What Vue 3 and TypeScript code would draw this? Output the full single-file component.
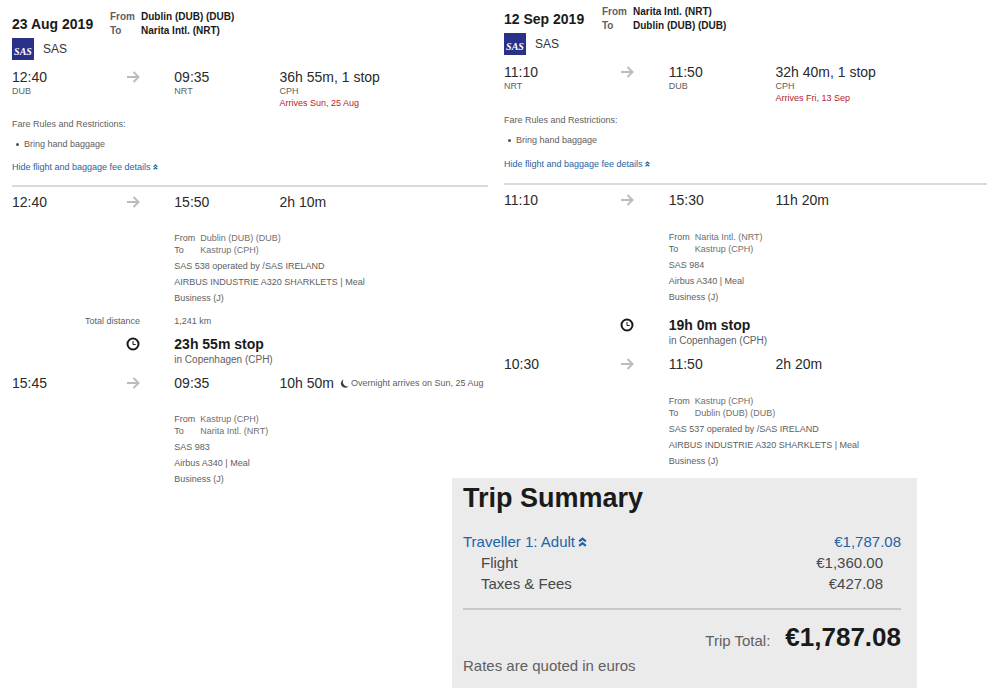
<script setup lang="ts">
import { reactive, ref } from 'vue'

interface Leg {
  depart: string
  arrive: string
  duration: string
  overnight?: string
  from: string
  to: string
  notes: string[]
  distance?: string
  stop?: { length: string; place: string }
}

interface Journey {
  id: string
  date: string
  from: string
  to: string
  depart: string
  departCode: string
  arrive: string
  arriveCode: string
  duration: string
  via: string
  arrivalNote: string
  legs: Leg[]
}

const journeys: Journey[] = [
  {
    id: 'outbound',
    date: '23 Aug 2019',
    from: 'Dublin (DUB) (DUB)',
    to: 'Narita Intl. (NRT)',
    depart: '12:40',
    departCode: 'DUB',
    arrive: '09:35',
    arriveCode: 'NRT',
    duration: '36h 55m, 1 stop',
    via: 'CPH',
    arrivalNote: 'Arrives Sun, 25 Aug',
    legs: [
      {
        depart: '12:40',
        arrive: '15:50',
        duration: '2h 10m',
        from: 'Dublin (DUB) (DUB)',
        to: 'Kastrup (CPH)',
        notes: ['SAS 538 operated by /SAS IRELAND', 'AIRBUS INDUSTRIE A320 SHARKLETS | Meal', 'Business (J)'],
        distance: '1,241 km',
        stop: { length: '23h 55m stop', place: 'in Copenhagen (CPH)' },
      },
      {
        depart: '15:45',
        arrive: '09:35',
        duration: '10h 50m',
        overnight: 'Overnight arrives on Sun, 25 Aug',
        from: 'Kastrup (CPH)',
        to: 'Narita Intl. (NRT)',
        notes: ['SAS 983', 'Airbus A340 | Meal', 'Business (J)'],
      },
    ],
  },
  {
    id: 'inbound',
    date: '12 Sep 2019',
    from: 'Narita Intl. (NRT)',
    to: 'Dublin (DUB) (DUB)',
    depart: '11:10',
    departCode: 'NRT',
    arrive: '11:50',
    arriveCode: 'DUB',
    duration: '32h 40m, 1 stop',
    via: 'CPH',
    arrivalNote: 'Arrives Fri, 13 Sep',
    legs: [
      {
        depart: '11:10',
        arrive: '15:30',
        duration: '11h 20m',
        from: 'Narita Intl. (NRT)',
        to: 'Kastrup (CPH)',
        notes: ['SAS 984', 'Airbus A340 | Meal', 'Business (J)'],
        stop: { length: '19h 0m stop', place: 'in Copenhagen (CPH)' },
      },
      {
        depart: '10:30',
        arrive: '11:50',
        duration: '2h 20m',
        from: 'Kastrup (CPH)',
        to: 'Dublin (DUB) (DUB)',
        notes: ['SAS 537 operated by /SAS IRELAND', 'AIRBUS INDUSTRIE A320 SHARKLETS | Meal', 'Business (J)'],
      },
    ],
  },
]

const detailsOpen = reactive<Record<string, boolean>>({ outbound: true, inbound: true })
const fareOpen = ref(true)

const fareItems = [
  { label: 'Flight', amount: '€1,360.00' },
  { label: 'Taxes & Fees', amount: '€427.08' },
]
</script>

<template>
  <main class="trip">
    <section v-for="j in journeys" :key="j.id" class="journey" :class="`journey--${j.id}`">
      <header class="head">
        <h2 class="date">{{ j.date }}</h2>
        <dl class="route route--head">
          <dt>From</dt>
          <dd>{{ j.from }}</dd>
          <dt>To</dt>
          <dd>{{ j.to }}</dd>
        </dl>
      </header>

      <div class="carrier">
        <span class="logo" aria-hidden="true">SAS</span>
        <span>SAS</span>
      </div>

      <div class="row row--overview">
        <div class="col-depart">
          <div class="time">{{ j.depart }}</div>
          <div class="code">{{ j.departCode }}</div>
        </div>
        <svg class="arrow" viewBox="0 0 14 12" aria-hidden="true"><path d="M1 6H13M7.5 1L12.5 6L7.5 11" /></svg>
        <div class="col-arrive">
          <div class="time">{{ j.arrive }}</div>
          <div class="code">{{ j.arriveCode }}</div>
        </div>
        <div class="col-duration">
          <div class="time">{{ j.duration }}</div>
          <div class="code">{{ j.via }}</div>
          <div class="alert">{{ j.arrivalNote }}</div>
        </div>
      </div>

      <p class="rules">Fare Rules and Restrictions:</p>
      <ul class="baggage">
        <li>Bring hand baggage</li>
      </ul>
      <button
        type="button"
        class="link toggle"
        :aria-expanded="detailsOpen[j.id]"
        @click="detailsOpen[j.id] = !detailsOpen[j.id]"
      >
        Hide flight and baggage fee details<svg class="chevrons" viewBox="0 0 8 9" aria-hidden="true">
          <path d="M1 4L4 1.5L7 4M1 8L4 5.5L7 8" />
        </svg>
      </button>
      <hr class="rule" />

      <div v-show="detailsOpen[j.id]">
        <article v-for="(leg, i) in j.legs" :key="i" class="leg">
          <div class="row">
            <div class="time col-depart">{{ leg.depart }}</div>
            <svg class="arrow" viewBox="0 0 14 12" aria-hidden="true"><path d="M1 6H13M7.5 1L12.5 6L7.5 11" /></svg>
            <div class="time col-arrive">{{ leg.arrive }}</div>
            <div class="time col-duration duration">
              {{ leg.duration }}
              <span v-if="leg.overnight" class="overnight">
                <svg class="moon" viewBox="0 0 10 10" aria-hidden="true">
                  <path d="M4 .5A4.8 4.8 0 1 0 9.5 8A5 5 0 0 1 4 .5Z" />
                </svg>
                {{ leg.overnight }}
              </span>
            </div>
          </div>
          <div class="row details">
            <div class="wide">
              <dl class="route">
                <dt>From</dt>
                <dd>{{ leg.from }}</dd>
                <dt>To</dt>
                <dd>{{ leg.to }}</dd>
              </dl>
              <p v-for="note in leg.notes" :key="note" class="note">{{ note }}</p>
            </div>
          </div>
          <div v-if="leg.distance" class="row distance">
            <span class="distance-label">Total distance</span>
            <span class="wide">{{ leg.distance }}</span>
          </div>
          <div v-if="leg.stop" class="row layover">
            <svg class="clock" viewBox="0 0 14 14" aria-hidden="true">
              <circle cx="7" cy="7" r="5.5" />
              <path d="M7 4V7.5H9.7" />
            </svg>
            <div class="wide">
              <h3 class="stop">{{ leg.stop.length }}</h3>
              <p class="place">{{ leg.stop.place }}</p>
            </div>
          </div>
        </article>
      </div>
    </section>

    <aside class="summary">
      <h2 class="summary-title">Trip Summary</h2>
      <table class="prices">
        <tbody>
          <tr class="traveller">
            <th scope="row">
              <button type="button" class="link" :aria-expanded="fareOpen" @click="fareOpen = !fareOpen">
                Traveller 1: Adult<svg class="chevrons chevrons--large" viewBox="0 0 8 9" aria-hidden="true">
                  <path d="M1 4L4 1.5L7 4M1 8L4 5.5L7 8" />
                </svg>
              </button>
            </th>
            <td>€1,787.08</td>
          </tr>
          <tr v-for="item in fareItems" v-show="fareOpen" :key="item.label" class="item">
            <th scope="row">{{ item.label }}</th>
            <td>{{ item.amount }}</td>
          </tr>
        </tbody>
      </table>
      <p class="total">
        <span>Trip Total:</span>
        <strong>€1,787.08</strong>
      </p>
      <p class="rates">Rates are quoted in euros</p>
    </aside>
  </main>
</template>

<style>
body {
  margin: 0;
  background: #fff;
}
</style>

<style scoped>
.trip {
  display: grid;
  grid-template-columns: minmax(0, 476fr) minmax(0, 483fr);
  grid-template-rows: auto 1fr;
  column-gap: 16px;
  min-height: 100vh;
  box-sizing: border-box;
  padding: 0 14px 0 12px;
  font-family: 'Liberation Sans', Arial, sans-serif;
  font-size: 9px;
  line-height: 12px;
  color: #606060;
}

h2,
h3,
p,
dl,
dd,
ul {
  margin: 0;
}

.journey--outbound {
  --rules-gap: 9px;
  --link-gap: 11px;
  --rule-gap: 12px;
  --details-gap: 22px;
  grid-row: 1 / span 2;
  padding-top: 10px;
}

.journey--inbound {
  --rules-gap: 10px;
  --link-gap: 12px;
  --rule-gap: 13px;
  --details-gap: 23px;
  padding-top: 5px;
}

.head {
  display: grid;
  grid-template-columns: 98px 1fr;
}

.date {
  font-size: 14px;
  line-height: 28px;
  color: #1a1a1a;
  white-space: nowrap;
}

.route {
  display: grid;
  grid-template-columns: 26px 1fr;
  color: #707070;
}

.route dt {
  color: #606060;
}

.route--head {
  grid-template-columns: 31px 1fr;
  font-size: 10px;
  font-weight: bold;
  line-height: 14px;
  color: #1a1a1a;
}

.carrier {
  display: flex;
  align-items: center;
  gap: 9px;
  height: 22px;
  font-size: 12px;
  color: #333;
}

.logo {
  width: 22px;
  height: 22px;
  background: #2b3088;
  color: #fff;
  font: italic bold 10px/27px 'Liberation Serif', serif;
  text-align: center;
}

.row {
  display: grid;
  grid-template-columns: minmax(0, 269fr) minmax(0, 72fr) minmax(0, 221fr) minmax(0, 438fr);
}

.row > * {
  grid-row: 1;
}

.row--overview {
  margin-top: 9px;
}

.time {
  font-size: 14px;
  line-height: 16px;
  color: #2a2a2a;
  white-space: nowrap;
}

.col-depart {
  grid-column: 1;
}

.col-arrive {
  grid-column: 3;
}

.col-duration {
  grid-column: 4;
}

.wide {
  grid-column: 3 / span 2;
}

.alert {
  color: #b5202c;
}

.arrow {
  grid-column: 1;
  justify-self: end;
  width: 14px;
  height: 12px;
  margin-top: 2px;
  fill: none;
  stroke: #bcbcbc;
  stroke-width: 2;
}

.rules {
  margin-top: var(--rules-gap);
}

.baggage {
  margin-top: 8px;
  padding: 0 0 0 4px;
  list-style: none;
}

.baggage li {
  display: flex;
  align-items: center;
  gap: 5px;
}

.baggage li::before {
  content: '';
  width: 3px;
  height: 3px;
  border-radius: 50%;
  background: #505050;
}

.link {
  padding: 0;
  border: 0;
  background: none;
  font: inherit;
  color: #1f64a4;
  cursor: pointer;
}

.toggle {
  display: block;
  margin-top: var(--link-gap);
}

.chevrons {
  width: 5px;
  height: 6px;
  margin-left: 2px;
  fill: none;
  stroke: currentColor;
  stroke-width: 2;
}

.chevrons--large {
  width: 9px;
  height: 10px;
  margin-left: 3px;
}

.rule {
  height: 2px;
  margin: var(--rule-gap) 0 7px;
  border: 0;
  background: #dadada;
}

.duration {
  display: flex;
  gap: 6px;
}

.overnight {
  display: flex;
  align-items: center;
  gap: 2px;
  font-size: 9px;
  line-height: 14px;
  color: #606060;
}

.moon {
  width: 9px;
  height: 9px;
  fill: #404040;
}

.details {
  margin-top: var(--details-gap);
}

.note {
  line-height: 16px;
}

.route + .note {
  margin-top: 2px;
}

.distance {
  margin-top: 9px;
}

.distance-label {
  justify-self: end;
}

.layover {
  margin: 11px 0 8px;
}

.distance + .layover {
  margin-top: 8px;
}

.clock {
  justify-self: end;
  width: 14px;
  height: 14px;
  margin-top: 2px;
  fill: none;
  stroke: #1a1a1a;
  stroke-width: 2;
}

.clock path {
  stroke-width: 1;
}

.stop {
  font-size: 14px;
  line-height: 18px;
  color: #1a1a1a;
}

.place {
  font-size: 10px;
  line-height: 14px;
}

.summary {
  grid-column: 2;
  margin: 9px 70px 0 -52px;
  padding: 3px 16px 12px 11px;
  background: #ebebeb;
  font-size: 15px;
  line-height: 21px;
}

.summary-title {
  font-size: 27px;
  line-height: 34px;
  color: #1a1a1a;
}

.prices {
  width: 100%;
  margin-top: 16px;
  border-collapse: collapse;
  color: #484848;
}

.prices th,
.prices td {
  padding: 0;
  font-weight: normal;
  text-align: left;
}

.prices td {
  text-align: right;
}

.prices .traveller {
  color: #1f64a4;
}

.prices .item th {
  padding-left: 18px;
}

.prices .item td {
  padding-right: 18px;
}

.total {
  display: flex;
  justify-content: flex-end;
  align-items: baseline;
  gap: 15px;
  margin-top: 14px;
  padding-top: 11px;
  border-top: 2px solid #c8c8c8;
}

.total strong {
  font-size: 26px;
  line-height: 32px;
  color: #1a1a1a;
}

.rates {
  margin-top: 2px;
}
</style>
